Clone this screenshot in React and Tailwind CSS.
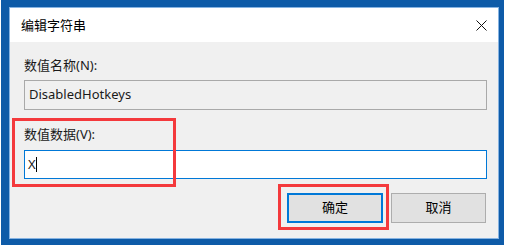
import React from 'react';

const font = { fontFamily: '"Noto Sans", "Noto Sans CJK SC", sans-serif' };

const CloseIcon = () => (
  <svg width="11" height="11" viewBox="0 0 11 11" className="block">
    <path d="M0.5 0.5 L10.5 10.5 M10.5 0.5 L0.5 10.5" stroke="#111" strokeWidth="1" fill="none" />
  </svg>
);

const EditStringDialog = () => {
  return (
    <div className="relative w-[506px] h-[245px] bg-white overflow-hidden" style={font}>
      {/* Window frame */}
      <div className="ml-px w-[503px] h-[245px] border-[#0e5ba8] border-l-[8px] border-t-[7px] border-r-[5px] border-b-[6px]">
        <div className="h-full flex flex-col border border-[#86b3e2]">
          {/* Title bar */}
          <div className="h-[34px] bg-white flex items-center justify-between pl-[11px] pr-[11px] text-[13px] text-black">
            <span className="leading-none">编辑字符串</span>
            <CloseIcon />
          </div>

          {/* Body */}
          <div className="flex-1 bg-[#f0f0f0] pl-[14px] pr-[11px] pt-[15px] flex flex-col text-[13px] text-[#1a1a1a]">
            <label className="h-[17px] leading-[17px]">数值名称(N):</label>
            <div className="mt-[6px] h-[30px] border border-[#a9a9a9] bg-[#f0f0f0] flex items-center pl-[4px]">
              DisabledHotkeys
            </div>

            <label className="mt-[16px] h-[17px] leading-[17px]">数值数据(V):</label>
            <div className="mt-[7px] h-[29px] border border-[#0078d7] bg-white flex items-center pl-[3px]">
              <span>X</span>
              <span className="w-px h-[15px] bg-black" />
            </div>

            <div className="mt-[14px] flex justify-end gap-[8px] mr-px">
              <button className="w-[96px] h-[30px] border-2 border-[#0078d7] bg-[#e1e1e1] text-[13px] text-black">
                确定
              </button>
              <button className="w-[95px] h-[30px] border border-[#adadad] bg-[#e1e1e1] text-[13px] text-black">
                取消
              </button>
            </div>
          </div>
        </div>
      </div>

      {/* Red annotation boxes */}
      <div className="absolute left-[12px] top-[118px] w-[164px] h-[69px] border-[3px] border-[#f4393c]" />
      <div className="absolute left-[278px] top-[184px] w-[111px] h-[46px] border-[3px] border-[#f4393c]" />
    </div>
  );
};

export default function App() {
  return <EditStringDialog />;
}
